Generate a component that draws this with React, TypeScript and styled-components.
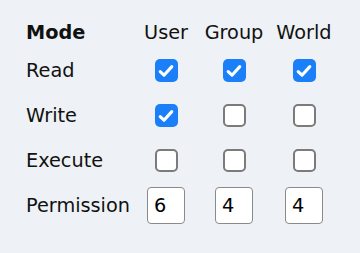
import { ReactElement, Fragment, useState } from 'react';
import styled, { createGlobalStyle } from 'styled-components';

const GlobalStyle = createGlobalStyle`
  html, body {
    margin: 0;
    padding: 0;
    background: #eef2f6;
  }
  body {
    font-family: 'DejaVu Sans', Verdana, sans-serif;
    color: #111;
  }
`;

const Wrapper = styled.div`
  width: 360px;
  height: 253px;
  box-sizing: border-box;
  padding: 16px 0 0 26px;
`;

const Grid = styled.div`
  display: grid;
  grid-template-columns: 107px 66px 70px 70px;
  grid-template-rows: 32px repeat(4, 45px);
  align-items: center;
  font-size: 19.3px;
`;

const Label = styled.div<{ bold?: boolean }>`
  font-weight: ${(p) => (p.bold ? 700 : 400)};
  white-space: nowrap;
`;

const Cell = styled.div`
  display: flex;
  justify-content: center;
  align-items: center;
  white-space: nowrap;
`;

const Box = styled.span<{ checked: boolean }>`
  width: 23px;
  height: 23px;
  box-sizing: border-box;
  border-radius: 5px;
  display: flex;
  align-items: center;
  justify-content: center;
  cursor: pointer;
  background: ${(p) => (p.checked ? '#1a7ff9' : '#fff')};
  border: ${(p) => (p.checked ? 'none' : '2px solid #7b7b7b')};
`;

const Digit = styled.input`
  width: 38px;
  height: 37px;
  box-sizing: border-box;
  border: 1.5px solid #8a8a8a;
  border-radius: 4px;
  background: #fff;
  padding: 0 0 0 6px;
  font-family: 'DejaVu Sans', Verdana, sans-serif;
  font-size: 19.3px;
  color: #000;
  outline: none;
`;

const who = ['User', 'Group', 'World'];
const modes = ['Read', 'Write', 'Execute'];

function Check({ checked, onToggle }: { checked: boolean; onToggle: () => void }) {
  return (
    <Box checked={checked} onClick={onToggle}>
      {checked && (
        <svg width="16" height="14" viewBox="0 0 16 14">
          <path
            d="M2.2 7.6 L6 11.2 L13.8 2.6"
            fill="none"
            stroke="#fff"
            strokeWidth="3.1"
            strokeLinecap="round"
            strokeLinejoin="round"
          />
        </svg>
      )}
    </Box>
  );
}

export default function App(): ReactElement {
  const [bits, setBits] = useState<boolean[][]>([
    [true, true, true],
    [true, false, false],
    [false, false, false],
  ]);

  const toggle = (r: number, c: number) => {
    setBits(bits.map((row, ri) => row.map((v, ci) => (ri === r && ci === c ? !v : v))));
  };

  const value = (c: number) =>
    (bits[0][c] ? 4 : 0) + (bits[1][c] ? 2 : 0) + (bits[2][c] ? 1 : 0);

  return (
    <Wrapper>
      <GlobalStyle />
      <Grid>
        <Label bold>Mode</Label>
        {who.map((w) => (
          <Cell key={w}>{w}</Cell>
        ))}
        {modes.map((m, r) => (
          <Fragment key={m}>
            <Label>{m}</Label>
            {who.map((w, c) => (
              <Cell key={m + w}>
                <Check checked={bits[r][c]} onToggle={() => toggle(r, c)} />
              </Cell>
            ))}
          </Fragment>
        ))}
        <Label>Permission</Label>
        {who.map((w, c) => (
          <Cell key={'p' + w}>
            <Digit value={String(value(c))} readOnly />
          </Cell>
        ))}
      </Grid>
    </Wrapper>
  );
}
